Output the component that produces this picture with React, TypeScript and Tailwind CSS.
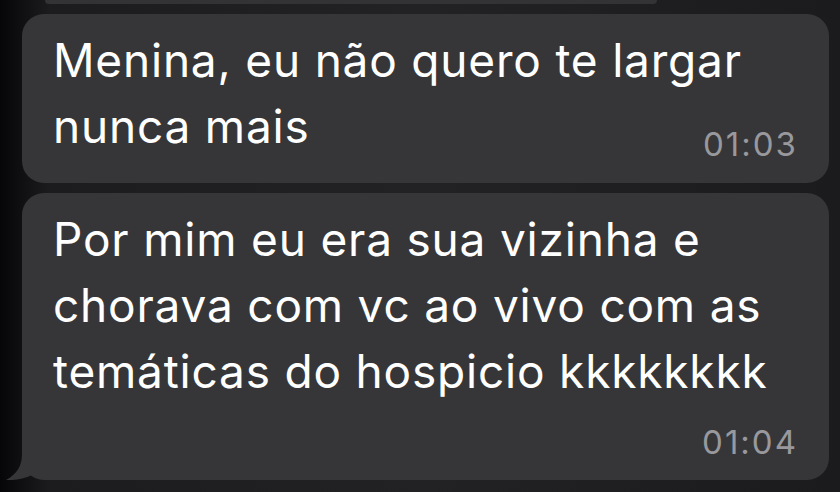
import React from "react";

const font = { fontFamily: '"Inter", "Liberation Sans", sans-serif' };

function Tail() {
  return (
    <svg
      className="absolute left-[-18px] bottom-0"
      width="46"
      height="40"
      viewBox="0 0 46 40"
    >
      <path
        d="M18 0 L18 14 C18 26 13 34 2 40 C10 40.5 20 39 28 35 C32 38 38 40 46 40 L46 0 Z"
        fill="#363638"
      />
    </svg>
  );
}

export default function App() {
  return (
    <div
      className="w-[840px] h-[492px] overflow-hidden bg-[linear-gradient(90deg,#060608_0%,#1c1c1e_6%,#222224_50%,#1b1b1d_100%)]"
      style={font}
    >
      <div className="ml-[45px] w-[612px] h-[4px] rounded-b-[14px] bg-[#333335]" />

      <div className="mt-[10px] ml-[22px] w-[807px] h-[169px] rounded-[22px] bg-[#363638] pl-[31px] pr-[31px] pt-[13px] text-white">
        <p className="text-[46px] leading-[66px] tracking-[0.8px] whitespace-nowrap">Menina, eu não quero te largar</p>
        <div className="flex items-end justify-between">
          <span className="text-[46px] leading-[66px] tracking-[0.8px]">nunca mais</span>
          <span className="text-[33px] leading-[34px] text-[#98989d] tracking-[2px] mb-[-2px]">01:03</span>
        </div>
      </div>

      <div className="relative mt-[10px] ml-[22px] w-[807px] h-[287px] rounded-[22px] bg-[#363638] pl-[31px] pr-[31px] pt-[13px] pb-[21px] flex flex-col justify-between">
        <p className="text-[46px] leading-[66px] tracking-[0.8px] text-white whitespace-nowrap">
          Por mim eu era sua vizinha e
          <br />
          chorava com vc ao vivo com as
          <br />
          temáticas do hospicio kkkkkkkk
        </p>
        <div className="flex justify-end">
          <span className="text-[33px] leading-[34px] text-[#98989d] tracking-[2px]">01:04</span>
        </div>
        <Tail />
      </div>
    </div>
  );
}
